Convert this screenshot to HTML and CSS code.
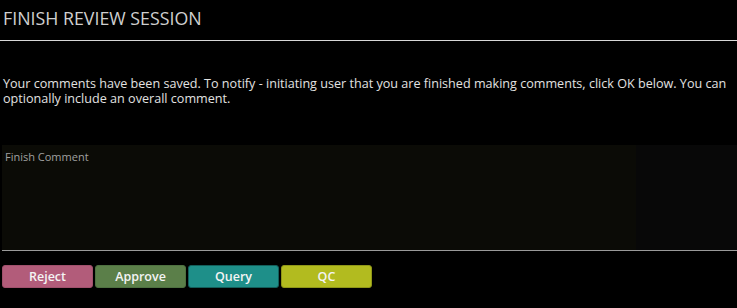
FILE: index.html
```html
<!DOCTYPE html>
<html lang="en">
<head>
  <meta charset="UTF-8" />
  <title>Finish Review Session</title>
  <link rel="stylesheet" href="styles.css">
</head>
<body>
  <div class="header">
    <h1 class="title">FINISH REVIEW SESSION</h1>
  </div>

  <p class="message">Your comments have been saved. To notify - initiating user that you are finished making comments, click OK below. You can optionally include an overall comment.</p>

  <div class="comment-box">
    <textarea id="finishComment" placeholder="Finish Comment"></textarea>
  </div>

  <div class="actions">
    <button class="btn reject">Reject</button>
    <button class="btn approve">Approve</button>
    <button class="btn query">Query</button>
    <button class="btn qc">QC</button>
  </div>
</body>
</html>
```

FILE: styles.css
```css
html, body {
  margin: 0;
  padding: 0;
  background: #000;
  color: #ddd;
  font-family: "Open Sans", Arial, sans-serif;
  height: 100vh;
  overflow: hidden;
}

.header {
  height: 40px;
  border-bottom: 1px solid #d8d8d8;
  display: flex;
  align-items: center;
}

.title {
  margin: 0 0 4px 3px;
  font-size: 17.8px;
  font-weight: normal;
  color: #cfcfcf;
}

.message {
  margin: 35px 0 0 3px;
  font-size: 12.6px;
  line-height: 15px;
  color: #e2e2e2;
}

.comment-box {
  margin: 39px 0 0 2px;
  border-bottom: 1px solid #9a9a9a;
  background: linear-gradient(to right, #0b0b06 0, #0b0b06 634px, #080808 634px);
}

.comment-box textarea {
  display: block;
  width: 100%;
  height: 105px;
  box-sizing: border-box;
  margin: 0;
  padding: 4px 3px;
  border: none;
  background: transparent;
  color: #ddd;
  font-family: "Open Sans", Arial, sans-serif;
  font-size: 11px;
  resize: none;
  outline: none;
}

.comment-box textarea::placeholder {
  color: #a0a0a0;
}

.actions {
  display: flex;
  gap: 2px;
  margin: 14px 0 0 2px;
}

.btn {
  width: 91px;
  height: 23px;
  border: 1px solid transparent;
  border-radius: 3px;
  color: #f4f4f4;
  font-family: "Open Sans", Arial, sans-serif;
  font-size: 12.5px;
  font-weight: 600;
  padding: 0;
}

.reject {
  background: #b25c7a;
  border-color: #a0506c;
}

.approve {
  background: #5b7f49;
  border-color: #4e7040;
}

.query {
  background: #1e8f89;
  border-color: #135e5a;
}

.qc {
  background: #b2bb1f;
  border-color: #8f9618;
}
```
